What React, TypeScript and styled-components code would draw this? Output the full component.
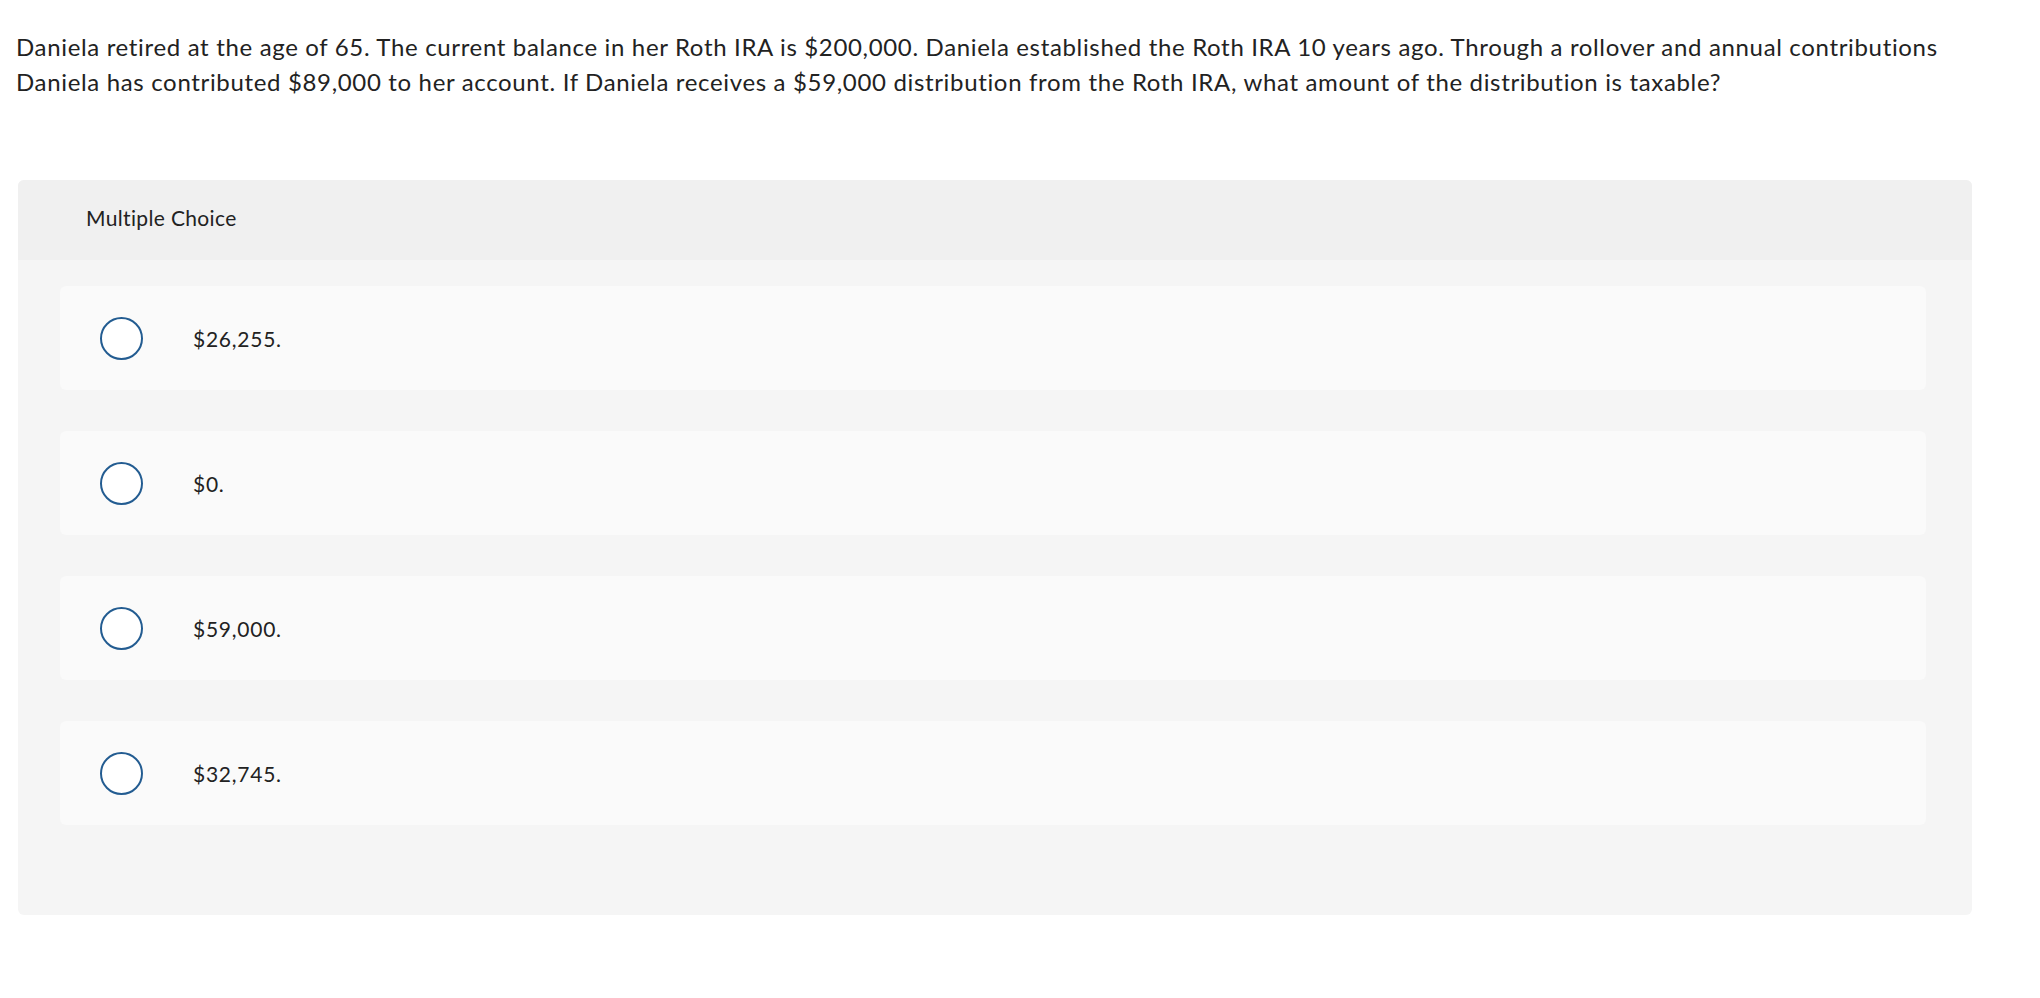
import React from "react";
import styled, { createGlobalStyle } from "styled-components";

const GlobalStyle = createGlobalStyle`
  html, body {
    margin: 0;
    padding: 0;
    background: #ffffff;
  }
  body {
    font-family: Lato, "Open Sans", "Liberation Sans", sans-serif;
    color: #222222;
  }
`;

const Page = styled.div`
  padding: 29px 68px 40px 16px;
`;

const Question = styled.p`
  margin: 0 0 81px 0;
  font-size: 24px;
  line-height: 35px;
  letter-spacing: 0.66px;
  color: #222222;
`;

const Panel = styled.section`
  margin-left: 2px;
  background: #f5f5f5;
  border-radius: 6px;
  overflow: hidden;
`;

const PanelHeader = styled.header`
  box-sizing: border-box;
  height: 80px;
  display: flex;
  align-items: center;
  padding: 0 0 5px 68px;
  background: #f0f0f0;
  font-size: 21px;
  letter-spacing: 0.35px;
  color: #222222;
`;

const Options = styled.div`
  display: flex;
  flex-direction: column;
  gap: 41px;
  padding: 26px 46px 90px 42px;
`;

const OptionCard = styled.label`
  height: 104px;
  display: flex;
  align-items: center;
  padding-left: 40px;
  background: #fafafa;
  border-radius: 6px;
  cursor: pointer;
`;

const Radio = styled.span`
  box-sizing: border-box;
  width: 43px;
  height: 43px;
  flex: 0 0 43px;
  border-radius: 50%;
  border: 2.5px solid #235c91;
  background: #ffffff;
`;

const OptionText = styled.span`
  margin-left: 50px;
  font-size: 21px;
  letter-spacing: 0.75px;
  color: #222222;
`;

const options = ["$26,255.", "$0.", "$59,000.", "$32,745."];

export default function App() {
  return (
    <>
      <GlobalStyle />
      <Page>
        <Question>
          Daniela retired at the age of 65. The current balance in her Roth IRA is $200,000. Daniela established the Roth
          IRA 10 years ago. Through a rollover and annual contributions Daniela has contributed $89,000 to her account. If
          Daniela receives a $59,000 distribution from the Roth IRA, what amount of the distribution is taxable?
        </Question>
        <Panel>
          <PanelHeader>Multiple Choice</PanelHeader>
          <Options>
            {options.map((o) => (
              <OptionCard key={o}>
                <Radio />
                <OptionText>{o}</OptionText>
              </OptionCard>
            ))}
          </Options>
        </Panel>
      </Page>
    </>
  );
}
